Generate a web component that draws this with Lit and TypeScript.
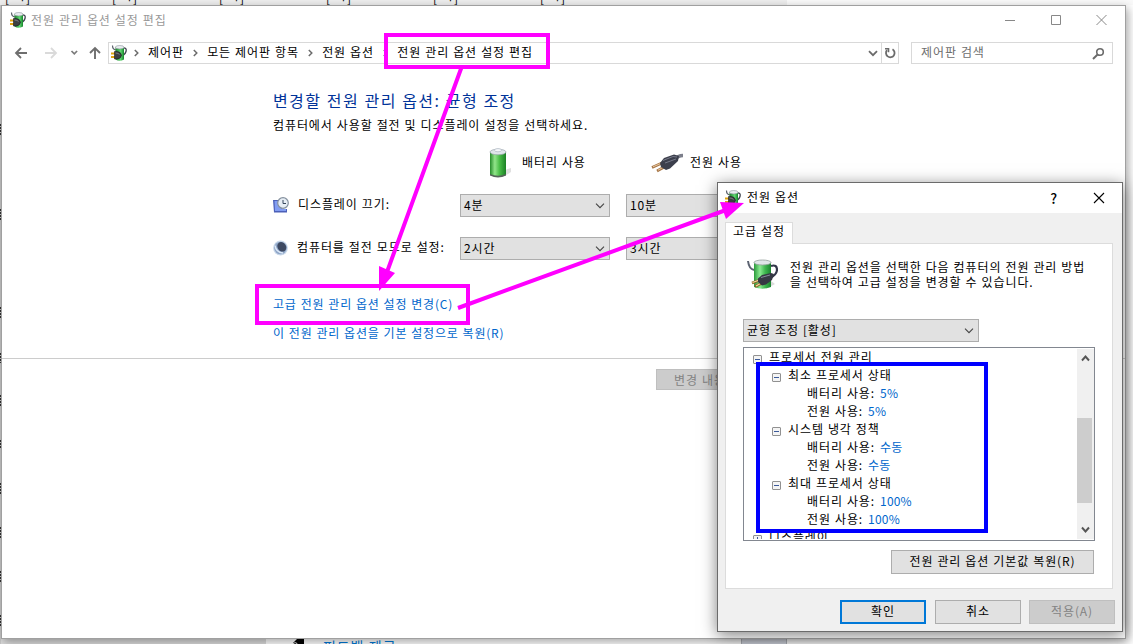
import { LitElement, html, css, svg } from 'lit';
import { customElement, property } from 'lit/decorators.js';

const baseText = css`
  * {
    box-sizing: border-box;
  }
`;

@customElement('power-icon')
class PowerIcon extends LitElement {
  static styles = css`
    :host {
      display: block;
      width: 16px;
      height: 16px;
    }

    svg {
      display: block;
    }
  `;

  render() {
    return html`
      <svg width="16" height="16" viewBox="0 0 16 16">
        <defs>
          <linearGradient id="g" x1="0" x2="1">
            <stop offset="0" stop-color="#1d7f2c" />
            <stop offset="0.6" stop-color="#5fd870" />
            <stop offset="1" stop-color="#14832a" />
          </linearGradient>
        </defs>
        <path d="M1.500.5q0 4 3.500 4.500" fill="none" stroke="#5b616b" stroke-width="1.200" />
        <path d="M12 3q4-.5 3 3.500q-.4 2-3 4" fill="none" stroke="#3f434e" stroke-width="1.300" />
        <path d="M4.500 2v12.500q4 2.500 8.500 0V2z" fill="url(#g)" />
        <ellipse cx="8.700" cy="2.200" rx="4.300" ry="1.700" fill="#e8ecef" stroke="#8b969c" stroke-width=".6" />
        <path d="M0 8.500h4M0 12h4" stroke="#e0a512" stroke-width="1.900" />
        <path d="M3.500 6.500h2.500q4 .3 4.500 3.800q-.5 3.500-4.500 3.700h-2.500z" fill="#3c3f42" stroke="#1b1c1e" stroke-width=".6" />
        <path d="M4.500 8q3 0 4 1.500" fill="none" stroke="#7b7e82" />
      </svg>
    `;
  }
}

@customElement('combo-box')
class ComboBox extends LitElement {
  static styles = css`
    :host {
      box-sizing: border-box;
      display: flex;
      align-items: center;
      justify-content: space-between;
      height: 23px;
      padding: 0 4px 0 3px;
      background: #e1e1e1;
      border: 1px solid #adadad;
    }

    span {
      margin-bottom: 1px;
    }

    svg {
      flex: none;
    }
  `;

  @property() value = '';

  render() {
    return html`
      <span>${this.value}</span>
      <svg width="10" height="6" viewBox="0 0 10 6">
        <path d="M1 .7l4 4 4-4" fill="none" stroke="#444" stroke-width="1.100" />
      </svg>
    `;
  }
}

const crumbs = ['제어판', '모든 제어판 항목', '전원 옵션', '전원 관리 옵션 설정 편집'];

@customElement('control-panel')
class ControlPanel extends LitElement {
  static styles = [
    baseText,
    css`
      :host {
        display: flex;
        flex-direction: column;
        background: #fff;
        color: #000;
      }

      .titlebar {
        display: flex;
        align-items: center;
        height: 28px;
        padding: 0 18px 0 8px;
        gap: 5px;
        color: #999;
      }

      .titlebar .name {
        flex: 1;
      }

      .nav {
        display: flex;
        align-items: center;
        height: 22px;
        margin-top: 8px;
        padding: 0 12px;
      }

      .arrows {
        flex: none;
        margin-right: 5px;
      }

      .address {
        display: flex;
        align-items: center;
        width: 791px;
        height: 22px;
        padding-left: 2px;
        border: 1px solid #d9d9d9;
      }

      .crumb {
        display: flex;
        align-items: center;
        height: 18px;
        white-space: nowrap;
      }

      .crumb span {
        margin-bottom: 2px;
      }

      .crumb svg {
        margin: 0 9px 0 7px;
      }

      .crumb + .crumb svg {
        margin: 0 9.300px 0 9px;
      }

      .tools {
        display: flex;
        align-items: center;
        height: 100%;
        margin-left: auto;
      }

      .refresh {
        display: flex;
        align-items: center;
        justify-content: center;
        width: 17px;
        height: 100%;
        margin-left: 3px;
        border-left: 1px solid #d9d9d9;
      }

      .search {
        display: flex;
        align-items: center;
        justify-content: space-between;
        width: 202px;
        height: 22px;
        margin-left: 12px;
        padding: 0 7px 0 9px;
        border: 1px solid #d9d9d9;
        color: #6d6d6d;
      }

      .search span {
        margin-bottom: 2px;
      }

      .main {
        height: 295px;
        padding: 25px 0 0 271px;
        border-bottom: 1px solid #ccc;
      }

      .heading {
        height: 22px;
        line-height: 22px;
        font-size: 16px;
        letter-spacing: 1.400px;
        color: #003399;
      }

      .lead {
        margin-top: 5px;
        height: 18px;
        line-height: 18px;
      }

      .grid {
        display: grid;
        grid-template-columns: 187px 150px 166px;
        grid-template-rows: 39px 43px 43px;
        margin-top: 11px;
        align-items: center;
      }

      .second {
        margin-left: 16px;
      }

      .label {
        display: flex;
        align-items: center;
        gap: 9px;
        padding-bottom: 2px;
        white-space: nowrap;
      }

      .source {
        display: flex;
        align-items: center;
        gap: 10px;
        padding: 0 0 3px 29px;
        white-space: nowrap;
      }

      .source span,
      .label span {
        margin-bottom: 2px;
      }

      .source.plug {
        gap: 6px;
        padding-left: 41px;
      }

      .links {
        display: flex;
        flex-direction: column;
        gap: 11px;
        margin-top: 25px;
        color: #0066cc;
        letter-spacing: 0.800px;
      }

      .links span {
        line-height: 18px;
      }

      .footer {
        padding: 10px 0 0 654px;
      }

      .save {
        width: 120px;
        height: 21px;
        padding-left: 17px;
        line-height: 19px;
        background: #ccc;
        border: 1px solid #bfbfbf;
        color: #838383;
        white-space: nowrap;
      }
    `,
  ];

  chevron() {
    return html`
      <svg width="5" height="8" viewBox="0 0 5 8">
        <path d="M.8 1l3 3-3 3" fill="none" stroke="#6b6b6b" stroke-width="1.500" />
      </svg>
    `;
  }

  render() {
    return html`
      <div class="titlebar">
        <power-icon></power-icon>
        <span class="name">전원 관리 옵션 설정 편집</span>
        <svg width="103" height="12" viewBox="0 0 103 12" fill="none" stroke="#888">
          <path d="M1 6.500h10M47.500 1.500h9v9h-9zM92.500 1l10 10M102.500 1l-10 10" />
        </svg>
      </div>

      <div class="nav">
        <svg class="arrows" width="89" height="16" viewBox="0 0 89 16" fill="none">
          <path d="M13 8H2M7 3l-5 5 5 5" stroke="#6e6e6e" stroke-width="1.800" />
          <path d="M31 8h11M37 3l5 5-5 5" stroke="#dadada" stroke-width="1.800" />
          <path d="M57.500 6l2.800 2.800 2.800-2.800" stroke="#7b7b7b" stroke-width="1.700" />
          <path d="M81 14V3M76 8l5-5 5 5" stroke="#6e6e6e" stroke-width="1.900" />
        </svg>
        <div class="address">
          <power-icon></power-icon>
          ${crumbs.map((name) => html`<div class="crumb">${this.chevron()}<span>${name}</span></div>`)}
          <div class="tools">
            <svg width="10" height="7" viewBox="0 0 10 7">
              <path d="M1 1.200l4 4 4-4" fill="none" stroke="#6b6b6b" stroke-width="1.800" />
            </svg>
            <div class="refresh">
              <svg width="12" height="12" viewBox="0 0 12 12" fill="none" stroke="#6b6b6b">
                <path d="M8.500 2.300A4.300 4.300 0 1 1 3 3.200" stroke-width="1.800" />
                <path d="M1 1.700h3.500v3.500" stroke-width="1.600" />
              </svg>
            </div>
          </div>
        </div>
        <div class="search">
          <span>제어판 검색</span>
          <svg width="13" height="13" viewBox="0 0 13 13" fill="none" stroke="#6b6b6b">
            <circle cx="8" cy="5" r="3.300" stroke-width="1.600" />
            <path d="M5.600 7.500L1 12" stroke-width="2" />
          </svg>
        </div>
      </div>

      <div class="main">
        <div class="heading">변경할 전원 관리 옵션: 균형 조정</div>
        <div class="lead">컴퓨터에서 사용할 절전 및 디스플레이 설정을 선택하세요.</div>

        <div class="grid">
          <div></div>
          <div class="source">
            <svg width="23" height="30" viewBox="0 0 23 30">
              <defs>
                <linearGradient id="cell" x1="0" x2="1">
                  <stop offset="0" stop-color="#268c2b" />
                  <stop offset="0.3" stop-color="#92e58a" />
                  <stop offset="0.6" stop-color="#49bd47" />
                  <stop offset="1" stop-color="#1a8024" />
                </linearGradient>
              </defs>
              <path d="M14 29l8-5v-4l-6 2z" fill="#ccc" opacity=".6" />
              <path d="M1 4v23q8 4 16 0V4z" fill="url(#cell)" />
              <path d="M1 26v1.500q8 4 16 0V26q-8 3.500-16 0z" fill="#56635a" />
              <ellipse cx="9" cy="4" rx="8" ry="2.800" fill="#dfe5ea" stroke="#98a4aa" stroke-width=".7" />
              <ellipse cx="9" cy="2.200" rx="3.500" ry="1.600" fill="#f7f9fb" stroke="#a3acba" stroke-width=".6" />
            </svg>
            <span>배터리 사용</span>
          </div>
          <div class="source plug">
            <svg width="33" height="20" viewBox="0 0 33 20">
              <path d="M23 7q4-4.500 9-4.500" fill="none" stroke="#7c7f8b" stroke-width="3.500" />
              <path d="M1 14.500l10-4.500M6 18l9-5" stroke="#a87748" stroke-width="2.800" />
              <path d="M2 13.800l8-3.500M7 17.200l7-4" stroke="#efd3ad" stroke-width=".9" />
              <path d="M9 10l4-5 10-3.500 5 1.500-1 5-8 7.500-4 1.500-5-3z" fill="#3c3f4c" />
              <path d="M12 7.500l10-4 4 .5M14 10l11-4" fill="none" stroke="#777a8a" />
            </svg>
            <span>전원 사용</span>
          </div>

          <div class="label">
            <svg width="16" height="16" viewBox="0 0 16 16">
              <path d="M0 3h9v9h5v3.500H1z" fill="#4c60b8" />
              <path d="M1.500 4h7v8h4.500v2H2z" fill="#829df2" />
              <circle cx="10" cy="6" r="5.300" fill="#e7eef5" stroke="#84909e" stroke-width="1.200" />
              <path d="M10 3v3.500h3" fill="none" stroke="#36475c" />
            </svg>
            <span>디스플레이 끄기:</span>
          </div>
          <combo-box value="4분"></combo-box>
          <combo-box class="second" value="10분"></combo-box>

          <div class="label">
            <svg width="15" height="16" viewBox="0 0 15 16">
              <circle cx="7.500" cy="8" r="7.400" fill="#c9d8e9" />
              <circle cx="7.500" cy="8" r="6.300" fill="#8fa6c8" />
              <ellipse cx="8.800" cy="6.800" rx="4.200" ry="5" transform="rotate(-35 8.800 6.800)" fill="#3d4961" />
              <path d="M2 5.500q1 7 8 7.500" fill="none" stroke="#dce9f7" stroke-width="1.500" />
            </svg>
            <span>컴퓨터를 절전 모드로 설정:</span>
          </div>
          <combo-box value="2시간"></combo-box>
          <combo-box class="second" value="3시간"></combo-box>
        </div>

        <div class="links">
          <span>고급 전원 관리 옵션 설정 변경(C)</span>
          <span>이 전원 관리 옵션을 기본 설정으로 복원(R)</span>
        </div>
      </div>

      <div class="footer">
        <div class="save">변경 내용 저장</div>
      </div>
    `;
  }
}

interface TreeRow {
  level: number;
  text: string;
  value?: string;
  sign?: string;
}

const rows: TreeRow[] = [
  { level: 0, text: '프로세서 전원 관리', sign: '-' },
  { level: 1, text: '최소 프로세서 상태', sign: '-' },
  { level: 2, text: '배터리 사용:', value: '5%' },
  { level: 2, text: '전원 사용:', value: '5%' },
  { level: 1, text: '시스템 냉각 정책', sign: '-' },
  { level: 2, text: '배터리 사용:', value: '수동' },
  { level: 2, text: '전원 사용:', value: '수동' },
  { level: 1, text: '최대 프로세서 상태', sign: '-' },
  { level: 2, text: '배터리 사용:', value: '100%' },
  { level: 2, text: '전원 사용:', value: '100%' },
  { level: 0, text: '디스플레이', sign: '+' },
];

@customElement('power-dialog')
class PowerDialog extends LitElement {
  static styles = [
    baseText,
    css`
      :host {
        display: flex;
        flex-direction: column;
        background: #f0f0f0;
        color: #000;
      }

      .titlebar {
        display: flex;
        align-items: center;
        height: 30px;
        padding: 0 17px 1px 7px;
        gap: 6px;
        background: #fff;
      }

      .titlebar .name {
        flex: 1;
        margin-bottom: 1px;
      }

      .help {
        margin-right: 29px;
        font-size: 14px;
        font-weight: 500;
      }

      .tab {
        width: 68px;
        height: 22px;
        margin: 9px 0 -1px 7px;
        padding-left: 7px;
        line-height: 16px;
        background: #fff;
        border: 1px solid #dcdcdc;
        border-bottom: none;
        white-space: nowrap;
        z-index: 1;
      }

      .page {
        display: flex;
        flex-direction: column;
        width: 388px;
        height: 346px;
        margin-left: 7px;
        padding: 15px 17px 0;
        background: #fff;
        border: 1px solid #dcdcdc;
      }

      .intro {
        display: flex;
        gap: 12px;
        height: 60px;
        padding-left: 3px;
        line-height: 15px;
        white-space: nowrap;
      }

      .intro svg {
        flex: none;
      }

      .plan {
        width: 236px;
      }

      .tree {
        display: flex;
        width: 352px;
        height: 194px;
        margin-top: 5px;
        padding: 1px 0 1px 9px;
        border: 1px solid #828790;
      }

      .rows {
        flex: 1;
        overflow: hidden;
      }

      .row {
        display: flex;
        align-items: center;
        gap: 7px;
        height: 18px;
        line-height: 16px;
      }

      .row span {
        margin-bottom: 2px;
      }

      .level-1 {
        padding-left: 19px;
      }

      .level-2 {
        padding-left: 54px;
        gap: 5px;
      }

      .toggle {
        margin-top: 2px;
      }

      .value {
        color: #0066cc;
        letter-spacing: 0.200px;
      }

      .scroll {
        display: flex;
        flex-direction: column;
        align-items: center;
        width: 17px;
        height: 190px;
        padding: 6px 0;
        background: #f0f0f0;
      }

      .thumb {
        width: 15px;
        height: 87px;
        margin: 56px 2px 23px 0;
        background: #cdcdcd;
      }

      .scroll svg {
        flex: none;
      }

      .button {
        width: 86px;
        height: 24px;
        line-height: 20px;
        text-align: center;
        background: #e1e1e1;
        border: 1px solid #adadad;
        white-space: nowrap;
      }

      .restore {
        width: 203px;
        margin: 9px 0 0 148px;
      }

      .actions {
        display: flex;
        gap: 9px;
        padding: 11px 0 0 122px;
      }

      .ok {
        line-height: 18px;
        border: 2px solid #0078d7;
      }

      .disabled {
        margin-left: -1px;
        background: #ccc;
        border-color: #bfbfbf;
        color: #838383;
      }
    `,
  ];

  toggle(sign: string) {
    return html`
      <svg class="toggle" width="9" height="9" viewBox="0 0 9 9">
        <rect x=".5" y=".5" width="8" height="8" rx=".5" fill="#f4f4f4" stroke="#919191" />
        <path d=${sign === '+' ? 'M2 4.500h5M4.500 2v5' : 'M2 4.500h5'} stroke="#3c5a9a" />
      </svg>
    `;
  }

  render() {
    return html`
      <div class="titlebar">
        <power-icon></power-icon>
        <span class="name">전원 옵션</span>
        <span class="help">?</span>
        <svg width="12" height="12" viewBox="0 0 12 12">
          <path d="M1 1l10 10M11 1L1 11" stroke="#000" stroke-width="1.100" />
        </svg>
      </div>

      <div class="tab">고급 설정</div>
      <div class="page">
        <div class="intro">
          <svg width="32" height="32" viewBox="0 0 32 32">
            <defs>
              <linearGradient id="body" x1="0" x2="1">
                <stop offset="0" stop-color="#2a9a3a" />
                <stop offset="0.35" stop-color="#8bea92" />
                <stop offset="0.65" stop-color="#3fb750" />
                <stop offset="1" stop-color="#1b8430" />
              </linearGradient>
            </defs>
            <path d="M20 30l9-5-4-3z" fill="#ccc" opacity=".7" />
            <path d="M2 2q1 8 6 9" fill="none" stroke="#5b6271" stroke-width="2" />
            <path d="M8 3v25q8 3.500 17 0V3z" fill="url(#body)" />
            <ellipse cx="16.500" cy="3.500" rx="8.500" ry="2.500" fill="#e0e5e8" stroke="#93a09b" stroke-width=".8" />
            <path d="M25 7q6-2 6 4q-.5 5-7 8" fill="none" stroke="#33364a" stroke-width="2.200" />
            <path d="M6 24l8-3M9 27.500l8-4" stroke="#8b6326" stroke-width="2.800" />
            <path d="M6.500 23.500l7-2.500M10 27l7-4" stroke="#f4dda2" stroke-width="1.200" />
            <path d="M12 19.500l4-3.500 9-2 3 1-2 6-6 4.500-4 1-4-3.500z" fill="#363844" />
            <path d="M15 18.500l9-2.500" stroke="#858a99" />
          </svg>
          <span>
            전원 관리 옵션을 선택한 다음 컴퓨터의 전원 관리 방법<br />을 선택하여 고급 설정을 변경할 수 있습니다.
          </span>
        </div>

        <combo-box class="plan" value="균형 조정 [활성]"></combo-box>

        <div class="tree">
          <div class="rows">
            ${rows.map(
              (row) => html`
                <div class="row level-${row.level}">
                  ${row.sign ? this.toggle(row.sign) : ''}
                  <span>${row.text}</span>
                  ${row.value ? html`<span class="value">${row.value}</span>` : ''}
                </div>
              `
            )}
          </div>
          <div class="scroll">
            <svg width="9" height="7" viewBox="0 0 9 7">
              <path d="M1 5.500l3.500-4 3.500 4" fill="none" stroke="#555" stroke-width="1.900" />
            </svg>
            <div class="thumb"></div>
            <svg width="9" height="7" viewBox="0 0 9 7">
              <path d="M1 1.500l3.500 4 3.500-4" fill="none" stroke="#555" stroke-width="1.900" />
            </svg>
          </div>
        </div>

        <div class="button restore">전원 관리 옵션 기본값 복원(R)</div>
      </div>

      <div class="actions">
        <div class="button ok">확인</div>
        <div class="button">취소</div>
        <div class="button disabled">적용(A)</div>
      </div>
    `;
  }
}

@customElement('app-root')
class AppRoot extends LitElement {
  static styles = css`
    :host {
      display: block;
      position: relative;
      width: 1133px;
      height: 644px;
      overflow: hidden;
      background: #fff;
      font-family: 'Noto Sans CJK KR', sans-serif;
      font-size: 12px;
      line-height: 18px;
      letter-spacing: 0.075em;
      word-spacing: 0.04em;
    }

    .desktop {
      display: flex;
      flex-direction: column;
      justify-content: space-between;
      height: 644px;
    }

    .strip {
      display: flex;
      height: 5px;
      padding-left: 5px;
      overflow: hidden;
      background: linear-gradient(90deg, #eee 787px, #fafafa 787px);
    }

    .strip span {
      width: 107px;
      margin-top: -10px;
      line-height: 15px;
      white-space: pre;
    }

    .taskbar {
      display: grid;
      grid-template-columns: 266px 475px 46px 1fr;
      height: 12px;
      background: #fff;
      overflow: hidden;
    }

    .taskbar .side {
      background: #dcdcdc;
    }

    .taskbar .feedback {
      display: flex;
      gap: 19px;
      padding: 7px 0 0 27px;
      color: #0078d7;
      font-size: 14px;
      line-height: 14px;
    }

    .taskbar .scroller {
      background: #d3d7e0;
      border: solid #b0b3ba;
      border-width: 0 1px;
    }

    .edge {
      position: absolute;
      left: 0;
      top: 5px;
    }

    control-panel,
    power-dialog {
      position: absolute;
      box-sizing: border-box;
    }

    control-panel {
      left: 1px;
      top: 5px;
      width: 1125px;
      height: 634px;
      border: 1px solid #a0a0a0;
      box-shadow: 2px 3px 9px rgba(0, 0, 0, 0.35);
    }

    power-dialog {
      left: 717px;
      top: 182px;
      width: 406px;
      height: 450px;
      border: 1px solid #6b6b6b;
      box-shadow: 0 3px 15px rgba(0, 0, 0, 0.5);
    }

    .marks {
      position: absolute;
      inset: 0;
    }
  `;

  render() {
    return html`
      <div class="desktop">
        <div class="strip">${[0, 1, 2, 3, 4, 5].map(() => html`<span>[ ㅋ]</span>`)}</div>
        <div class="taskbar">
          <div class="side"></div>
          <div class="feedback">
            <svg width="11" height="10" viewBox="0 0 11 10">
              <path d="M4 0h7v10H0V4z" fill="#000" />
              <path d="M0 5q3-3 5 1" fill="none" stroke="#fff" />
            </svg>
            <span>피드백 제공</span>
          </div>
          <div class="scroller"></div>
        </div>
      </div>

      <svg class="edge" width="1" height="639" viewBox="0 0 1 639">
        <path d="M.5 0v639" stroke="#c8c8c8" />
        <path
          d="M.5 119v11M.5 204v12M.5 302v12M.5 348v10M.5 390v12M.5 435v9M.5 478v11M.5 522v11M.5 566v11M.5 610v12"
          stroke="#333"
          stroke-dasharray="2 1"
        />
      </svg>

      <control-panel></control-panel>
      <power-dialog></power-dialog>

      <svg class="marks" width="1133" height="644" viewBox="0 0 1133 644" fill="none">
        ${svg`
          <g stroke="#ff00ff" stroke-width="4">
            <rect x="386" y="35" width="162" height="32" />
            <rect x="257" y="286" width="211" height="37" />
            <path d="M462 66L387 272M458 308L726 210" />
          </g>
          <path d="M379 266l16 7-16 18zM720 202l24 1-18 16z" fill="#ff00ff" />
          <rect x="758" y="364" width="228" height="167" stroke="#0000ff" stroke-width="4" />
        `}
      </svg>
    `;
  }
}
